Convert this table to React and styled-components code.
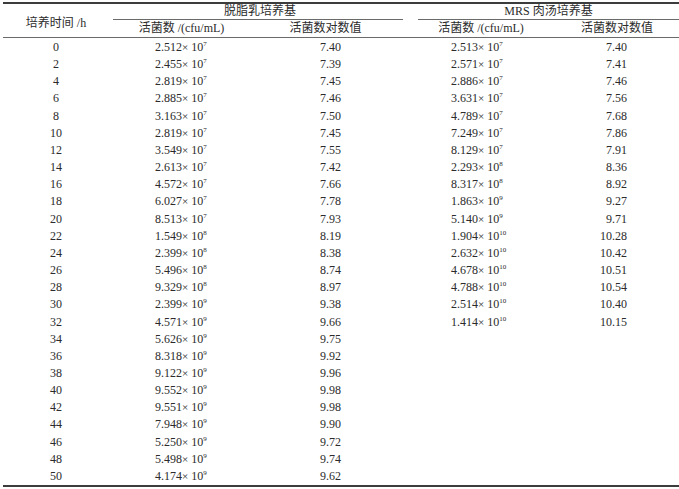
import React from "react";
import styled, { createGlobalStyle } from "styled-components";

const cols = "110px 147px 143px 15px 132px 129px";
const rowH = 17.16;

const GlobalStyle = createGlobalStyle`
    body {
        margin: 0;
        background: #ffffff;
        color: #2b2b2b;
        font-family: "Liberation Serif", "Noto Sans CJK SC", serif;
    }
`;

const Table = styled.div`
    width: 676px;
    margin: 2px 0 0 3px;
    border-top: 2px solid #3c3c3c;
    border-bottom: 2px solid #3c3c3c;
    font-size: 12px;
`;

const Head = styled.div`
    display: grid;
    grid-template-columns: ${cols};
    grid-template-rows: 16px 17px;
    border-bottom: 1px solid #6a6a6a;
`;

const TimeHead = styled.div`
    grid-row: 1 / 3;
    grid-column: 1;
    display: flex;
    align-items: center;
    justify-content: center;
    padding: 2px 4px 0 0;
`;

const GroupHead = styled.div`
    grid-row: 1;
    grid-column: ${p => p.$col} / span 2;
    border-bottom: 1px solid #6a6a6a;
    text-align: center;
    line-height: 15px;
    padding-left: ${p => p.$shift || 0}px;
`;

const SubHead = styled.div`
    grid-row: 2;
    grid-column: ${p => p.$col};
    line-height: 17px;
    text-align: center;
    padding-left: ${p => p.$left || 0}px;
    padding-right: ${p => p.$right || 0}px;
    white-space: nowrap;
`;

const Row = styled.div`
    display: grid;
    grid-template-columns: ${cols};
    height: ${rowH}px;
    line-height: ${rowH}px;
    &:first-child {
        margin-top: 1px;
    }
`;

const TimeCell = styled.div`
    text-align: center;
    padding-right: 4px;
`;

const CountCell = styled.div`
    padding-left: ${p => p.$left}px;
    white-space: nowrap;
`;

const LogCell = styled.div`
    text-align: ${p => (p.$right ? "right" : "left")};
    padding-left: ${p => p.$left || 0}px;
    padding-right: ${p => p.$right || 0}px;
`;

const Times = styled.span`
    font-size: 11px;
`;

const Sup = styled.sup`
    font-size: 7px;
    vertical-align: 5px;
    line-height: 0;
`;

const skim = [
    ["2.512", 7, "7.40"], ["2.455", 7, "7.39"], ["2.819", 7, "7.45"], ["2.885", 7, "7.46"],
    ["3.163", 7, "7.50"], ["2.819", 7, "7.45"], ["3.549", 7, "7.55"], ["2.613", 7, "7.42"],
    ["4.572", 7, "7.66"], ["6.027", 7, "7.78"], ["8.513", 7, "7.93"], ["1.549", 8, "8.19"],
    ["2.399", 8, "8.38"], ["5.496", 8, "8.74"], ["9.329", 8, "8.97"], ["2.399", 9, "9.38"],
    ["4.571", 9, "9.66"], ["5.626", 9, "9.75"], ["8.318", 9, "9.92"], ["9.122", 9, "9.96"],
    ["9.552", 9, "9.98"], ["9.551", 9, "9.98"], ["7.948", 9, "9.90"], ["5.250", 9, "9.72"],
    ["5.498", 9, "9.74"], ["4.174", 9, "9.62"],
];

const mrs = [
    ["2.513", 7, "7.40"], ["2.571", 7, "7.41"], ["2.886", 7, "7.46"], ["3.631", 7, "7.56"],
    ["4.789", 7, "7.68"], ["7.249", 7, "7.86"], ["8.129", 7, "7.91"], ["2.293", 8, "8.36"],
    ["8.317", 8, "8.92"], ["1.863", 9, "9.27"], ["5.140", 9, "9.71"], ["1.904", 10, "10.28"],
    ["2.632", 10, "10.42"], ["4.678", 10, "10.51"], ["4.788", 10, "10.54"], ["2.514", 10, "10.40"],
    ["1.414", 10, "10.15"],
];

const Count = ({ value }) =>
    value ? (
        <>
            {value[0]}<Times>×</Times> 10<Sup>{value[1]}</Sup>
        </>
    ) : null;

export default function App() {
    return (
        <>
            <GlobalStyle />
            <Table>
                <Head>
                    <TimeHead>培养时间 /h</TimeHead>
                    <GroupHead $col={2} $shift={4}>脱脂乳培养基</GroupHead>
                    <GroupHead $col={5}>MRS 肉汤培养基</GroupHead>
                    <SubHead $col={2} $right={10}>活菌数 /(cfu/mL)</SubHead>
                    <SubHead $col={3} $right={12}>活菌数对数值</SubHead>
                    <SubHead $col={5} $right={6}>活菌数 /(cfu/mL)</SubHead>
                    <SubHead $col={6} $left={5}>活菌数对数值</SubHead>
                </Head>
                <div>
                    {skim.map((s, i) => {
                        const m = mrs[i];
                        return (
                            <Row key={i}>
                                <TimeCell>{i * 2}</TimeCell>
                                <CountCell $left={42}><Count value={s} /></CountCell>
                                <LogCell $left={60}>{s[2]}</LogCell>
                                <div />
                                <CountCell $left={33}><Count value={m} /></CountCell>
                                <LogCell $right={52}>{m ? m[2] : ""}</LogCell>
                            </Row>
                        );
                    })}
                </div>
            </Table>
        </>
    );
}
